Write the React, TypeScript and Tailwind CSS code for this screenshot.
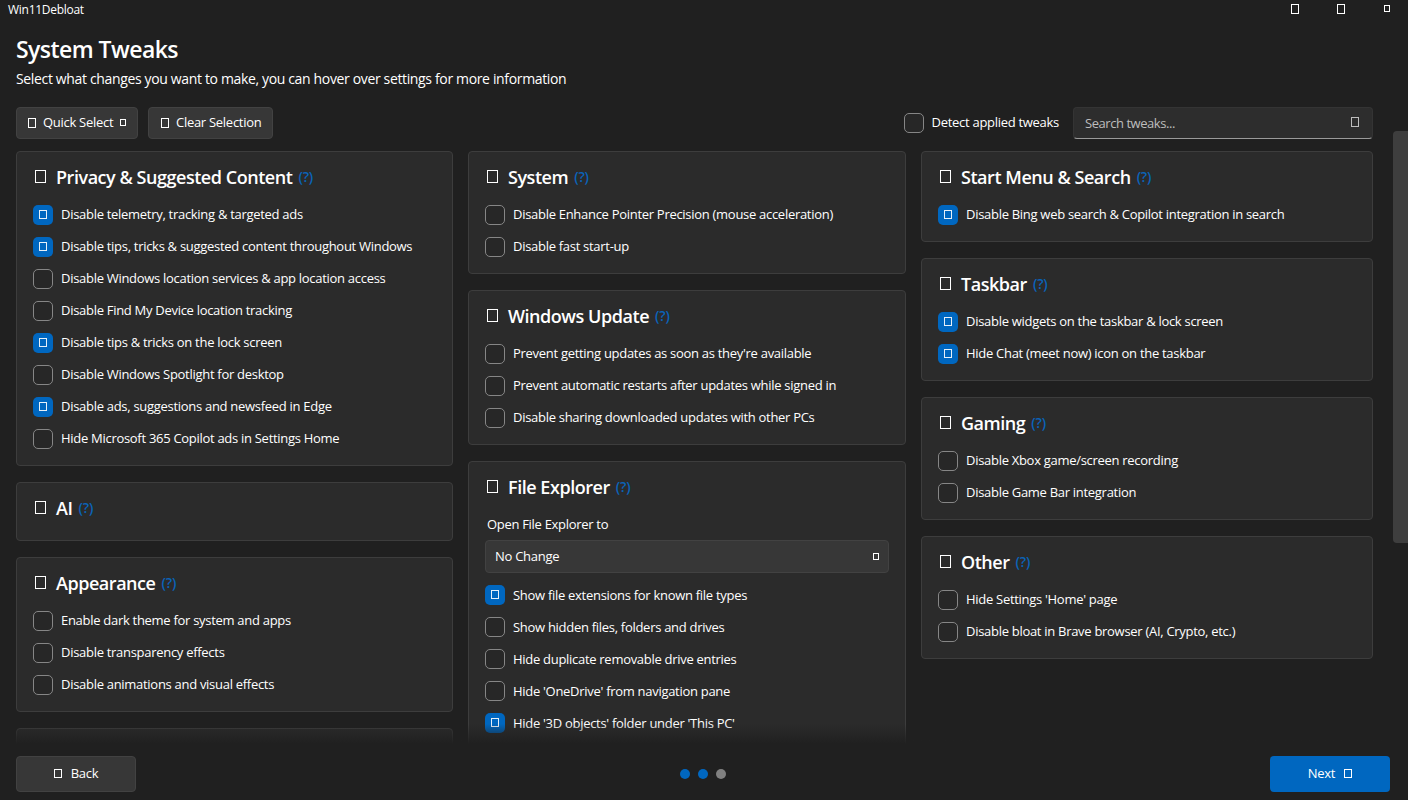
import { useState } from "react";
import clsx from "clsx";

type Tweak = {
    label: string;
    checked?: boolean;
};

type Category = {
    title: string;
    select?: { label: string; value: string };
    tweaks: Tweak[];
};

const columns: { className: string; categories: Category[] }[] = [
    {
        className: "w-[437px]",
        categories: [
            {
                title: "Privacy & Suggested Content",
                tweaks: [
                    { label: "Disable telemetry, tracking & targeted ads", checked: true },
                    { label: "Disable tips, tricks & suggested content throughout Windows", checked: true },
                    { label: "Disable Windows location services & app location access" },
                    { label: "Disable Find My Device location tracking" },
                    { label: "Disable tips & tricks on the lock screen", checked: true },
                    { label: "Disable Windows Spotlight for desktop" },
                    { label: "Disable ads, suggestions and newsfeed in Edge", checked: true },
                    { label: "Hide Microsoft 365 Copilot ads in Settings Home" },
                ],
            },
            { title: "AI", tweaks: [] },
            {
                title: "Appearance",
                tweaks: [
                    { label: "Enable dark theme for system and apps" },
                    { label: "Disable transparency effects" },
                    { label: "Disable animations and visual effects" },
                ],
            },
            { title: "", tweaks: [] },
        ],
    },
    {
        className: "w-[438px]",
        categories: [
            {
                title: "System",
                tweaks: [{ label: "Disable Enhance Pointer Precision (mouse acceleration)" }, { label: "Disable fast start-up" }],
            },
            {
                title: "Windows Update",
                tweaks: [
                    { label: "Prevent getting updates as soon as they're available" },
                    { label: "Prevent automatic restarts after updates while signed in" },
                    { label: "Disable sharing downloaded updates with other PCs" },
                ],
            },
            {
                title: "File Explorer",
                select: { label: "Open File Explorer to", value: "No Change" },
                tweaks: [
                    { label: "Show file extensions for known file types", checked: true },
                    { label: "Show hidden files, folders and drives" },
                    { label: "Hide duplicate removable drive entries" },
                    { label: "Hide 'OneDrive' from navigation pane" },
                    { label: "Hide '3D objects' folder under 'This PC'", checked: true },
                ],
            },
        ],
    },
    {
        className: "w-[452px]",
        categories: [
            {
                title: "Start Menu & Search",
                tweaks: [{ label: "Disable Bing web search & Copilot integration in search", checked: true }],
            },
            {
                title: "Taskbar",
                tweaks: [
                    { label: "Disable widgets on the taskbar & lock screen", checked: true },
                    { label: "Hide Chat (meet now) icon on the taskbar", checked: true },
                ],
            },
            {
                title: "Gaming",
                tweaks: [{ label: "Disable Xbox game/screen recording" }, { label: "Disable Game Bar integration" }],
            },
            {
                title: "Other",
                tweaks: [{ label: "Hide Settings 'Home' page" }, { label: "Disable bloat in Brave browser (AI, Crypto, etc.)" }],
            },
        ],
    },
];

// Hollow box glyph used for every symbol icon
const Glyph = ({ className }: { className: string }) => <span className={clsx("block shrink-0 border", className)} />;

const CheckBox = function ({ label, checked = false, className = "pb-0.5" }: Tweak & { className?: string }) {
    const [on, setOn] = useState(checked);

    return (
        <button type="button" role="checkbox" aria-checked={on} onClick={() => setOn(!on)} className="flex h-8 items-center gap-2">
            <span
                className={clsx(
                    "flex size-5 shrink-0 justify-center rounded-[5px] pt-[5px]",
                    on ? "bg-[#0067c0]" : "border border-[#868686] bg-[#272727]"
                )}
            >
                {on && <Glyph className="h-[9px] w-2 border-white/90" />}
            </span>
            <span className={clsx("text-[13px] leading-5 tracking-[-0.29px] whitespace-nowrap", className)}>{label}</span>
        </button>
    );
};

const CategoryCard = function ({ title, select, tweaks }: Category) {
    return (
        <section className="flex min-h-[59px] flex-col items-start rounded-[4px] border border-[#3d3d3d] bg-[#2b2b2b] px-4 pb-2.5">
            {title && (
                <div className="flex h-[47px] items-center pt-0.5 pl-0.5">
                    <Glyph className="mr-2.5 h-[13px] w-[11px] border-white" />
                    <h2 className="text-[18px] leading-6 font-semibold tracking-[-0.46px] whitespace-nowrap">{title}</h2>
                    <span className="ml-1.5 text-[14px] leading-5 font-semibold tracking-[-0.2px] text-[#0a63b8]">(?)</span>
                </div>
            )}
            {select && (
                <div className="mb-1.5 w-full">
                    <div className="flex h-[31px] items-center pl-0.5 text-[13px] tracking-[-0.3px]">{select.label}</div>
                    <button
                        type="button"
                        className="flex h-[33px] w-full items-center justify-between rounded-[4px] border border-[#424242] bg-[#373737] px-[9px] text-[13px] tracking-[-0.28px]"
                    >
                        {select.value}
                        <Glyph className="h-[7px] w-1.5 border-white" />
                    </button>
                </div>
            )}
            {tweaks.map((tweak) => (
                <CheckBox key={tweak.label} {...tweak} className={select ? "pb-0" : "pb-0.5"} />
            ))}
        </section>
    );
};

export default function App() {
    return (
        <div className="flex h-[800px] w-[1408px] flex-col overflow-hidden bg-[#202020] font-['Open_Sans','Noto_Sans',sans-serif] text-white select-none">
            <header className="flex h-[31px] justify-between pl-2">
                <span className="pt-px text-[12px] leading-[18px] tracking-[-0.28px]">Win11Debloat</span>
                <div className="flex pr-[18px]">
                    <Glyph className="mt-1 mr-[38px] h-2.5 w-2" />
                    <Glyph className="mt-1 mr-[39px] h-2.5 w-2" />
                    <Glyph className="mt-[5px] h-[7px] w-1.5" />
                </div>
            </header>

            <div className="h-[76px] pl-4">
                <h1 className="text-[23px] leading-9 font-semibold tracking-[-0.55px]">System Tweaks</h1>
                <p className="mt-0.5 text-[14px] leading-5 tracking-[-0.35px]">
                    Select what changes you want to make, you can hover over settings for more information
                </p>
            </div>

            <div className="flex h-8 items-center pr-[35px] pl-4 text-[13px] tracking-[-0.28px]">
                <button type="button" className="flex h-8 w-[122px] items-center rounded-[4px] border border-[#424242] bg-[#373737] pl-[11px]">
                    <Glyph className="mr-[7px] mb-px h-2.5 w-2" />
                    Quick Select
                    <Glyph className="mb-0.5 ml-[7px] h-[7px] w-1.5" />
                </button>
                <button type="button" className="ml-2.5 flex h-8 w-[125px] items-center rounded-[4px] border border-[#424242] bg-[#373737] pl-3">
                    <Glyph className="mr-[7px] h-2.5 w-2" />
                    Clear Selection
                </button>
                <div className="mr-3.5 ml-auto">
                    <CheckBox label="Detect applied tweaks" />
                </div>
                <div className="flex h-8 w-[300px] items-center justify-between rounded-[4px] border border-[#343434] border-b-[#9a9a9a] bg-[#2d2d2d] pr-[13px] pl-[11px] text-[#bdbdbd]">
                    <span className="pt-0.5 tracking-[-0.45px]">Search tweaks...</span>
                    <Glyph className="mb-0.5 h-2.5 w-2 border-[#bdbdbd]" />
                </div>
            </div>

            <div className="relative flex h-[605px] justify-between">
                <main className="flex h-[605px] items-start gap-[15px] overflow-hidden pt-3 pl-4">
                    {columns.map((column, i) => (
                        <div key={i} className={clsx("flex flex-col gap-4", column.className)}>
                            {column.categories.map((category) => (
                                <CategoryCard key={category.title} {...category} />
                            ))}
                        </div>
                    ))}
                </main>
                <div className="mt-[-8px] h-[412px] w-[15px] rounded-l-[4px] bg-[#3e3e3e]" />
                <div className="pointer-events-none absolute bottom-0 left-0 h-5 w-[1388px] bg-linear-to-b from-transparent to-[#202020]" />
            </div>

            <footer className="flex h-14 items-start justify-between pt-3 pr-[18px] pl-4 text-[13px] tracking-[-0.28px]">
                <button type="button" className="flex h-9 w-[120px] items-center justify-center rounded-[4px] border border-[#424242] bg-[#373737]">
                    <Glyph className="mr-[9px] mb-0.5 h-[9px] w-2" />
                    Back
                </button>
                <div className="mt-[13px] flex gap-2">
                    <span className="size-2.5 rounded-full bg-[#0067c0]" />
                    <span className="size-2.5 rounded-full bg-[#0067c0]" />
                    <span className="size-2.5 rounded-full bg-[#808080]" />
                </div>
                <button type="button" className="flex h-9 w-[120px] items-center justify-center rounded-[4px] bg-[#0067c0]">
                    Next
                    <Glyph className="mb-0.5 ml-[9px] h-[9px] w-2" />
                </button>
            </footer>
        </div>
    );
}
